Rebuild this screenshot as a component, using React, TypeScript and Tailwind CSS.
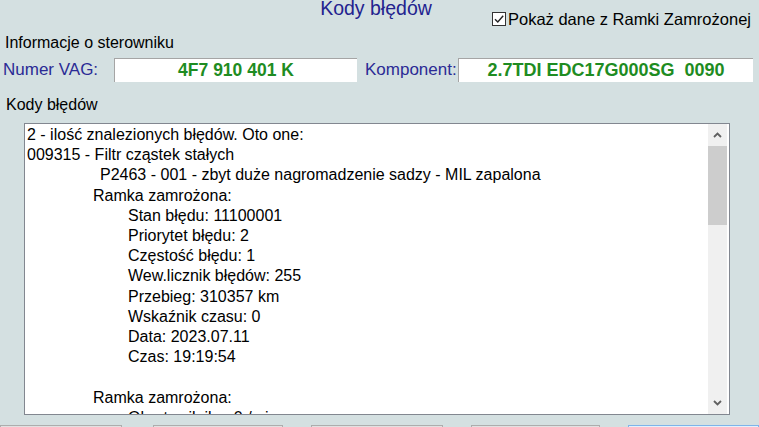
import React from "react";

const lines: { text: string; indent: number }[] = [
  { text: "2 - ilość znalezionych błędów. Oto one:", indent: 0 },
  { text: "009315 - Filtr cząstek stałych", indent: 0 },
  { text: "P2463 - 001 - zbyt duże nagromadzenie sadzy - MIL zapalona", indent: 73 },
  { text: "Ramka zamrożona:", indent: 66 },
  { text: "Stan błędu: 11100001", indent: 101 },
  { text: "Priorytet błędu: 2", indent: 101 },
  { text: "Częstość błędu: 1", indent: 101 },
  { text: "Wew.licznik błędów: 255", indent: 101 },
  { text: "Przebieg: 310357 km", indent: 101 },
  { text: "Wskaźnik czasu: 0", indent: 101 },
  { text: "Data: 2023.07.11", indent: 101 },
  { text: "Czas: 19:19:54", indent: 101 },
  { text: "\u00a0", indent: 0 },
  { text: "Ramka zamrożona:", indent: 66 },
  { text: "Obroty silnika: 0 /min", indent: 101 },
];

function Chevron({ down }: { down?: boolean }) {
  return (
    <svg width="9" height="6" viewBox="0 0 9 6" className="block">
      <path
        d={down ? "M1 1 L4.5 4.5 L8 1" : "M1 5 L4.5 1.5 L8 5"}
        fill="none"
        stroke="#606060"
        strokeWidth="1.8"
      />
    </svg>
  );
}

export default function App() {
  return (
    <div className="w-[759px] h-[427px] overflow-hidden bg-[#d4e0e1] text-black font-['Liberation_Sans',Arial,sans-serif]">
      {/* header: title + checkbox */}
      <div className="grid grid-cols-[1fr_auto_1fr] h-[33px]">
        <div />
        <div className="text-[19.5px] leading-[16px] text-[#23238f] pr-[7px]">Kody błędów</div>
        <div className="flex justify-end items-start pt-[9px] pr-[8px]">
          <div className="flex items-center gap-[2px]">
            <div className="w-[14px] h-[14px] border border-[#333333] bg-white flex items-center justify-center">
              <svg width="12" height="12" viewBox="0 0 12 12">
                <path d="M2 6.2 L4.8 9 L10.2 2.8" fill="none" stroke="#222222" strokeWidth="1.4" />
              </svg>
            </div>
            <span className="text-[16.5px] leading-[20px]">Pokaż dane z Ramki Zamrożonej</span>
          </div>
        </div>
      </div>

      {/* controller info */}
      <div className="h-[25px] pl-[5px] text-[16px] leading-[20px]">Informacje o sterowniku</div>

      <div className="h-[24px] flex items-center">
        <span className="w-[114px] pl-[3px] text-[17px] leading-[20px] text-[#2b2b95]">Numer VAG:</span>
        <div className="w-[243px] h-[24px] bg-white border-t border-l border-[#a5a5a5] flex items-center justify-center text-[17.5px] font-bold text-[#1e8c22] whitespace-pre">
          4F7 910 401 K
        </div>
        <span className="ml-[8px] w-[93px] text-[17px] leading-[20px] text-[#2b2b95]">Komponent:</span>
        <div className="w-[295px] h-[24px] bg-white border-t border-l border-[#a5a5a5] flex items-center justify-center text-[18px] font-bold text-[#1e8c22] whitespace-pre">
          2.7TDI EDC17G000SG  0090
        </div>
      </div>

      {/* fault codes */}
      <div className="pt-[13px] pl-[6px] text-[16px] leading-[20px] h-[41px]">Kody błędów</div>

      <div className="ml-[24px] w-[706px] h-[292px] border border-[#828790] bg-white flex">
        <div className="flex-1 overflow-hidden pl-[2px] pt-[1px] text-[16px] leading-[20.2px] whitespace-pre">
          {lines.map((l, i) => (
            <div key={i} style={{ paddingLeft: l.indent }}>
              {l.text}
            </div>
          ))}
        </div>
        <div className="w-[19px] mr-[2px] bg-[#f0f0f0] flex flex-col">
          <div className="h-[22px] flex items-center justify-center">
            <Chevron />
          </div>
          <div className="h-[79px] bg-[#cdcdcd]" />
          <div className="flex-1" />
          <div className="h-[22px] flex items-center justify-center">
            <Chevron down />
          </div>
        </div>
      </div>

      {/* dialog buttons */}
      <div className="mt-[10px] flex">
        <div className="w-[122px] h-[30px] bg-[#e1e1e1] border border-[#adadad]" />
        <div className="ml-[31px] w-[130px] h-[30px] bg-[#e1e1e1] border border-[#adadad]" />
        <div className="ml-[28px] w-[132px] h-[30px] bg-[#e1e1e1] border border-[#adadad]" />
        <div className="ml-[28px] w-[129px] h-[30px] bg-[#e1e1e1] border border-[#adadad]" />
        <div className="ml-[28px] w-[131px] h-[30px] bg-[#e5f1fb] border border-[#7eb4ea]" />
      </div>
    </div>
  );
}
